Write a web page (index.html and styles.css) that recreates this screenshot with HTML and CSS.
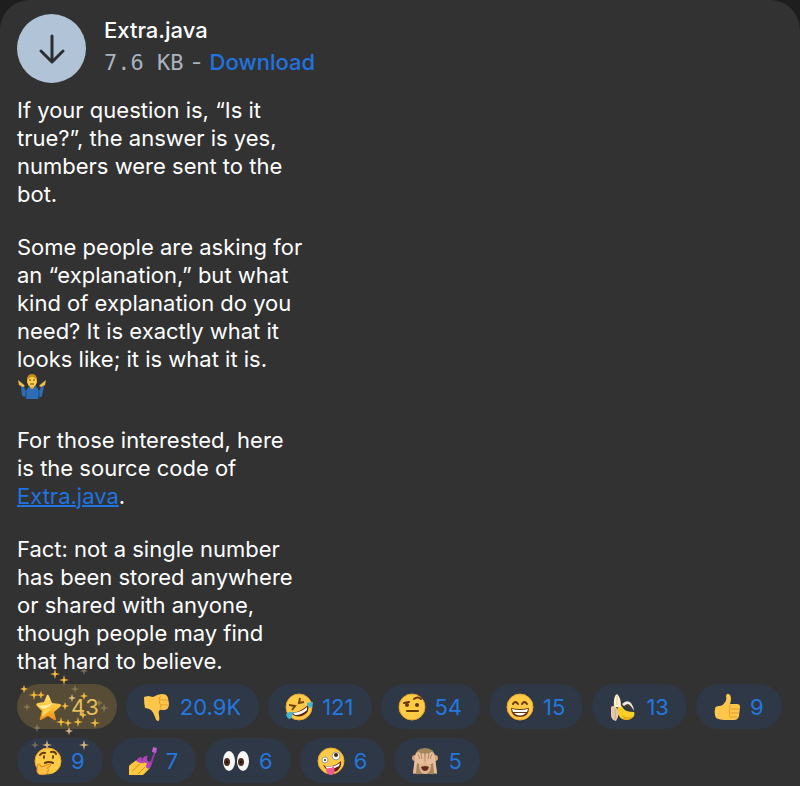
FILE: index.html
```html
<!DOCTYPE html>
<html lang="en">
<head>
  <meta charset="UTF-8" />
  <meta name="viewport" content="width=device-width, initial-scale=1.0" />
  <title>Extra.java</title>
  <link rel="stylesheet" href="styles.css">
</head>
<body>
  <main class="message">
    <div class="file">
      <button class="file-icon" aria-label="Download Extra.java">
        <svg width="28" height="32" viewBox="0 0 28 32" fill="none" stroke="#2b2f33" stroke-width="3" stroke-linecap="round" stroke-linejoin="round">
          <path d="M14 3v26M3 18l11 11 11-11" />
        </svg>
      </button>
      <div class="file-info">
        <div class="file-name">Extra.java</div>
        <div class="file-meta"><span class="file-size">7.6 KB</span><span>-</span><a href="#">Download</a></div>
      </div>
    </div>

    <div class="text">
      <p>If your question is, “Is it<br>true?”, the answer is yes,<br>numbers were sent to the<br>bot.</p>
      <p>Some people are asking for<br>an “explanation,” but what<br>kind of explanation do you<br>need? It is exactly what it<br>looks like; it is what it is.<br>
        <svg class="shrug" viewBox="0 0 30 26" role="img" aria-label="Man shrugging">
          <path d="M6 11l3 6 3-5q3-2 7 0l3 5 3-6 2 1-2 10q-2 2-4 0v3H9v-3q-3 2-4-1L4 12z" fill="#2f6cb3" />
          <path d="M9 17v8M22 17v8" stroke="#1d4c85" />
          <path d="M1 6l5 4 2 2-2 1-4-2zM29 6l-5 4-2 2 2 1 4-2z" fill="#f2bd4b" />
          <path d="M13 11h4v3l-2 1-2-1z" fill="#e8a82e" />
          <ellipse cx="15" cy="7" rx="5" ry="6" fill="#ffcf45" />
          <path d="M10 6q0-6 5-6t5 6q-2-3-5-3t-5 3" fill="#c68b25" />
          <path d="M12 6h2M16 6h2M13 10h4" stroke="#65431a" />
        </svg>
      </p>
      <p>For those interested, here<br>is the source code of<br><a class="source" href="#">Extra.java</a>.</p>
      <p>Fact: not a single number<br>has been stored anywhere<br>or shared with anyone,<br>though people may find<br>that hard to believe.</p>
    </div>

    <div class="reactions">
      <button class="reaction paid">
        <svg class="emoji" viewBox="0 0 28 28">
          <defs>
            <linearGradient id="gold" x1="0" y1="0" x2="0" y2="1">
              <stop offset="0" stop-color="#ffe27a" />
              <stop offset=".5" stop-color="#ffc13a" />
              <stop offset="1" stop-color="#ee8b12" />
            </linearGradient>
          </defs>
          <path d="M13 2q1-1 2 1l3 7 8 1q2 1 0 3l-6 5 2 7q0 2-2 1l-6-4-7 4q-2 0-1-2l2-7-5-5q-2-2 1-3l6-1z" fill="url(#gold)" />
          <path d="M3 12q8 2 15-2-2 5-9 6z" fill="#fff0a6" />
          <path d="M9 17l9-2-5 5-5 4z" fill="#ffd452" />
        </svg>
        <span>43</span>
        <svg class="sparkles" viewBox="0 0 100 90">
          <defs>
            <path id="spark" d="M0-5L1-1 5 0 1 1 0 5-1 1-5 0-1-1z" />
            <path id="spark-small" d="M0-4L1-1 4 0 1 1 0 4-1 1-4 0-1-1z" />
          </defs>
          <g fill="#f5b83d">
            <use href="#spark" x="38" y="10" />
            <use href="#spark" x="47" y="16" />
            <use href="#spark" x="17" y="31" />
            <use href="#spark-small" x="24" y="31" />
            <use href="#spark-small" x="7" y="25" />
            <use href="#spark-small" x="48" y="42" />
            <use href="#spark" x="44" y="58" />
            <use href="#spark-small" x="51" y="59" />
            <use href="#spark" x="61" y="58" />
            <use href="#spark" x="78" y="59" />
            <use href="#spark-small" x="67" y="32" />
            <use href="#spark-small" x="66" y="51" />
          </g>
          <g fill="#d9b483">
            <use href="#spark-small" x="55" y="34" />
            <use href="#spark-small" x="52" y="67" />
            <use href="#spark" x="30" y="81" />
            <use href="#spark" x="67" y="81" />
          </g>
          <g fill="#a58f62" opacity=".6">
            <use href="#spark-small" x="67" y="7" />
            <use href="#spark-small" x="58" y="25" />
            <use href="#spark-small" x="82" y="39" />
            <use href="#spark" x="87" y="44" />
            <use href="#spark-small" x="20" y="64" />
            <use href="#spark-small" x="18" y="81" />
            <use href="#spark-small" x="10" y="43" />
          </g>
        </svg>
      </button>

      <button class="reaction">
        <svg class="emoji" viewBox="0 0 28 28">
          <path d="M1 4l4-1 5 1q5-3 9-3 5 0 6 4l1 6q0 5-4 6h-5q-2 1-1 5 1 6-1 6-2 0-3-4-1-4-4-7-3-2-6-2Q1 11 1 4z" fill="#ffc64b" />
          <path d="M18 7h7M18 12h8M18 3q-3 2-1 4-2 3 1 5-2 3 1 5" fill="none" stroke="#e49b31" />
        </svg>
        <span>20.9K</span>
      </button>

      <button class="reaction">
        <svg class="emoji" viewBox="0 0 28 28">
          <circle class="face" cx="14" cy="14" r="13" />
          <path d="M4 12l6 1-3 4M15 5l-1 5 5-1" fill="none" stroke="#75420c" stroke-width="2" />
          <path d="M6 20q10-1 17-8 2 7-4 10-7 4-13-2z" fill="#65200d" />
          <path d="M8 20q9-1 14-6v3q-5 5-12 5z" fill="#fff" />
          <path d="M1 21q4-3 7-2 0 5-3 7-3 0-4-5zM22 10q4-1 6-1 0 5-3 6-3-1-3-5z" fill="#42b5cf" />
        </svg>
        <span>121</span>
      </button>

      <button class="reaction">
        <svg class="emoji" viewBox="0 0 28 28">
          <circle class="face" cx="14" cy="14" r="13" />
          <ellipse cx="9" cy="12" rx="2" ry="2" fill="#65370d" />
          <ellipse cx="19" cy="12" rx="2" ry="2" fill="#65370d" />
          <path d="M6 10l5-1M16 6q4-3 7 0M9 18h11" fill="none" stroke="#65370d" stroke-width="2" stroke-linecap="round" />
        </svg>
        <span>54</span>
      </button>

      <button class="reaction">
        <svg class="emoji" viewBox="0 0 28 28">
          <circle class="face" cx="14" cy="14" r="13" />
          <path d="M7 11q2-4 5 0M16 11q2-4 5 0" fill="none" stroke="#65370d" stroke-width="2" stroke-linecap="round" />
          <path d="M5 15q9 2 18 0 0 9-9 9t-9-9z" fill="#65370d" />
          <path d="M6 16q8 2 16 0l-1 3H7zM8 20h12q-6 5-12 0z" fill="#fff" />
        </svg>
        <span>15</span>
      </button>

      <button class="reaction">
        <svg class="emoji" viewBox="0 0 28 28">
          <path d="M9 12q3-1 5 3 2 4 11 4 1 1 0 4-3 4-8 4-7-1-9-8z" fill="#f8d126" />
          <path d="M13 22q5 4 12 1-3 4-8 4-3-1-4-5z" fill="#e9ad1b" />
          <path d="M5 14Q4 3 8 1q4 3 4 13z" fill="#fff2cf" />
          <path d="M8 3v9" fill="none" stroke="#e0c99c" />
          <path d="M13 12q5-5 9-1 2 3 2 7-3-5-10-5z" fill="#463d35" />
          <path d="M13 11q5-5 9-1 3 4 3 8-3-6-6-7-2 0-4 2z" fill="#f3eadb" />
          <path d="M2 14q2-2 5 0 3 4 2 10l-2 4q-5-1-5-6z" fill="#e8c9ad" />
          <path d="M6 16q1 5 0 10" fill="none" stroke="#cfa98b" />
        </svg>
        <span>13</span>
      </button>

      <button class="reaction">
        <svg class="emoji" viewBox="0 0 28 28">
          <path d="M2 16q0-3 4-3 4 0 6-4 2-2 1-6 1-4 4-1 2 3 0 9h7q3 0 3 3l-1 9q-1 4-5 4H11q-4 0-8-2-2-4-1-9z" fill="#ffc64b" />
          <path d="M18 16h8M18 20h8M18 24h6M18 12q-3 2-1 4-2 2 0 4-2 3 1 5" fill="none" stroke="#e49b31" />
        </svg>
        <span>9</span>
      </button>

      <button class="reaction">
        <svg class="emoji" viewBox="0 0 28 28">
          <circle class="face" cx="14" cy="14" r="13" />
          <ellipse cx="10" cy="10" rx="1" ry="2" fill="#65370d" />
          <ellipse cx="19" cy="10" rx="1" ry="2" fill="#65370d" />
          <path d="M6 8q2-3 5-2M17 5q4-1 5 2M11 16q4-2 8 0" fill="none" stroke="#65370d" stroke-width="2" stroke-linecap="round" />
          <path d="M4 17q2-1 3 3l9-3q2 1-1 3l-2 1q3 1 1 3 0 4-5 4-7 0-6-6z" fill="#ffbf42" stroke="#d98820" />
        </svg>
        <span>9</span>
      </button>

      <button class="reaction">
        <svg class="emoji" viewBox="0 0 28 28">
          <path d="M0 28v-9q5-5 10-7l11 6q1 3-2 5l-5 5z" fill="#ffc93f" />
          <path d="M3 24l8-7M9 27l7-7" stroke="#d98d24" />
          <path d="M7 14q2-4 6-4-1 4 3 6-5 1-9-2zM13 12q3-4 6-3-3 4 2 7-6 1-8-4zM17 18q4-5 6-4 1 3-3 8-4-1-3-4z" fill="#b044b8" />
          <path d="M22 16l4-11" stroke="#97369f" stroke-width="2" />
          <path d="M24 0l4 1-1 5-4-1z" fill="#c55bd0" />
        </svg>
        <span>7</span>
      </button>

      <button class="reaction">
        <svg class="emoji" viewBox="0 0 28 28">
          <ellipse cx="7" cy="14" rx="6" ry="10" fill="#f7f7f5" />
          <ellipse cx="21" cy="14" rx="6" ry="10" fill="#f7f7f5" />
          <ellipse cx="5" cy="15" rx="3" ry="4" fill="#4c2c1c" />
          <ellipse cx="19" cy="15" rx="3" ry="4" fill="#4c2c1c" />
          <circle cx="5" cy="15" r="1" fill="#0e0a08" />
          <circle cx="19" cy="15" r="1" fill="#0e0a08" />
        </svg>
        <span>6</span>
      </button>

      <button class="reaction">
        <svg class="emoji" viewBox="0 0 28 28">
          <circle class="face" cx="14" cy="14" r="13" />
          <path d="M6 18q9 4 18-4 1 6-4 10-8 4-14-6z" fill="#65200d" />
          <path d="M8 19q8 2 15-3l-1 3q-6 4-12 3z" fill="#fff" />
          <path d="M9 21q5 1 8-2 2 9-3 9-5 0-5-7z" fill="#ee5c91" />
          <circle cx="8" cy="13" r="3" fill="#fff" stroke="#9aa08c" />
          <circle cx="19" cy="9" r="4" fill="#fff" stroke="#9aa08c" />
          <circle cx="8" cy="13" r="1" fill="#45240b" />
          <circle cx="19" cy="8" r="2" fill="#45240b" />
        </svg>
        <span>6</span>
      </button>

      <button class="reaction">
        <svg class="emoji" viewBox="0 0 28 28">
          <circle cx="4" cy="11" r="3" fill="#d6a47d" />
          <circle cx="24" cy="11" r="3" fill="#d6a47d" />
          <path d="M4 13Q3 1 14 1t10 12l2 12q-3 3-6 2H8q-4 1-6-2z" fill="#a2875a" />
          <ellipse cx="14" cy="19" rx="6" ry="8" fill="#e0b48c" />
          <path d="M4 9q1-4 4-4l2 2 3-1 1 5v4q-4 4-8 1l-1 10-3 1zM24 9q-1-4-4-4l-2 2-3-1-1 5v4q4 4 8 1l1 10 3 1z" fill="#e8bd9c" />
          <path d="M7 7l2 5M10 7l1 5M21 7l-2 5M18 7l-1 5M14 9v6" stroke="#b88868" />
          <path d="M10 20q4-2 8 0-1 4-4 4t-4-4z" fill="#672b1c" />
        </svg>
        <span>5</span>
      </button>
    </div>
  </main>
</body>
</html>
```
FILE: styles.css
```css
html, body {
  margin: 0;
  padding: 0;
  background: #1e1e1e;
  color: #fff;
  font-family: Inter, 'Liberation Sans', sans-serif;
  font-size: 22px;
}
a {
  color: #1f74e0;
  text-decoration: none;
}
button {
  border: none;
  padding: 0;
  font: inherit;
  cursor: pointer;
}
.message {
  min-height: 100vh;
  box-sizing: border-box;
  padding: 14px 17px 3px;
  background: #323232;
  border-radius: 30px 30px 0 0;
}
.file {
  display: flex;
  gap: 18px;
}
.file-icon {
  display: flex;
  align-items: center;
  justify-content: center;
  flex: none;
  width: 69px;
  height: 69px;
  border-radius: 50%;
  background: #b1c3d7;
}
.file-name {
  line-height: 32px;
  font-weight: 500;
}
.file-meta {
  display: flex;
  align-items: baseline;
  gap: 8px;
  line-height: 33px;
  color: #a9b3bd;
}
.file-size {
  font-family: 'DejaVu Sans Mono', monospace;
}
.file-meta a {
  font-weight: 500;
}
.text {
  display: flex;
  flex-direction: column;
  gap: 25px;
  margin-top: 13px;
  line-height: 28px;
}
.text p {
  margin: 0;
}
.shrug {
  display: block;
  width: 30px;
  height: 28px;
}
.source {
  text-decoration: underline;
  text-decoration-thickness: 2px;
}
.reactions {
  display: flex;
  flex-wrap: wrap;
  gap: 9px;
  margin-top: 9px;
}
.reaction {
  position: relative;
  display: flex;
  align-items: center;
  gap: 9px;
  height: 45px;
  padding: 0 18px 0 17px;
  border-radius: 23px;
  background: #2e3847;
  color: #2378df;
}
.paid {
  background: #574d36;
  color: #e5bd59;
}
.emoji {
  width: 28px;
  height: 28px;
}
.face {
  fill: #ffca45;
  stroke: #eda62e;
}
.sparkles {
  position: absolute;
  left: 0;
  top: -20px;
  z-index: 1;
  width: 100px;
  height: 90px;
  pointer-events: none;
}
```
